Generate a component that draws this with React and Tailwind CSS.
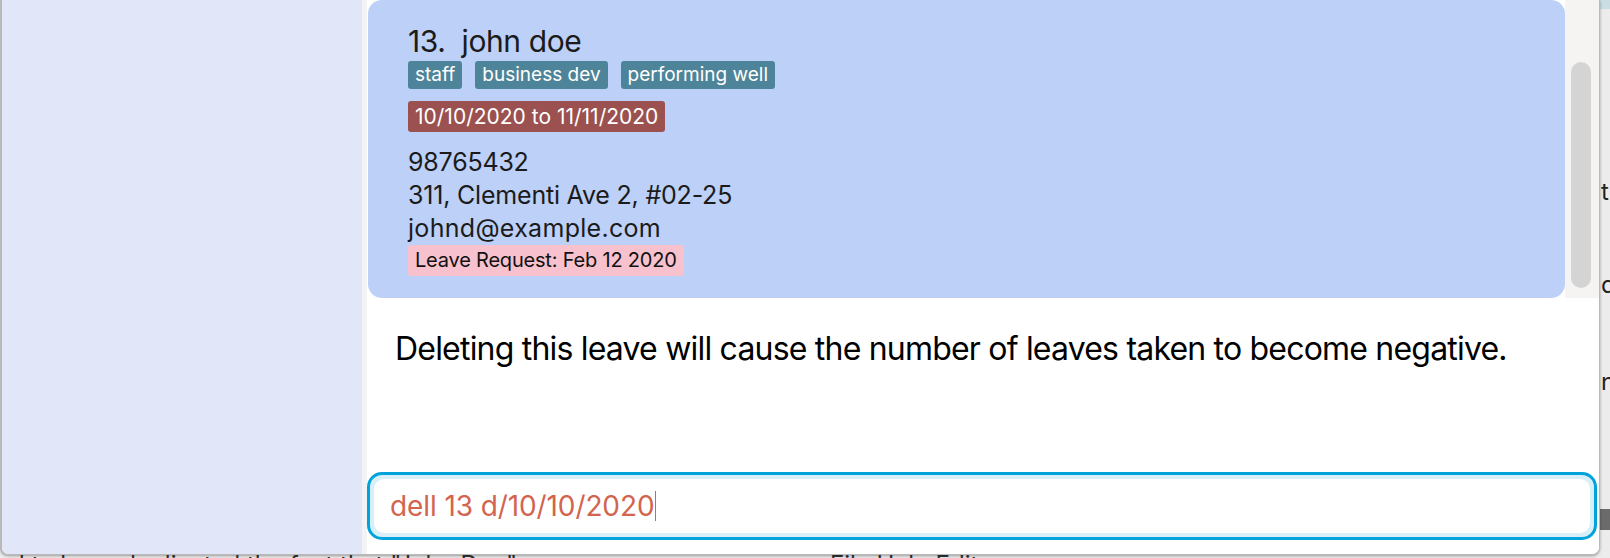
import React from "react";

const tags = ["staff", "business dev", "performing well"];

function PersonCard() {
  return (
    <div className="w-[1197px] h-[298px] ml-px bg-[#bdd0f7] rounded-[14px] pl-10 pt-6 text-[#1b1b1b]">
      <div className="text-[30px] leading-[34px] tracking-[-0.4px]">13.&nbsp; john doe</div>
      <div className="flex gap-[13px] mt-[3px]">
        {tags.map((t) => (
          <span
            key={t}
            className="h-[28px] px-[7px] rounded-[3px] bg-[#4e8499] text-white text-[19px] leading-[28px]"
          >
            {t}
          </span>
        ))}
      </div>
      <div className="flex mt-[12px]">
        <span className="h-[31px] px-[7px] rounded-[3px] bg-[#9a5150] text-white text-[21px] leading-[31px]">
          10/10/2020 to 11/11/2020
        </span>
      </div>
      <div className="mt-[14px] text-[25px] leading-[33px] tracking-[-0.2px]">
        <div>98765432</div>
        <div>311, Clementi Ave 2, #02-25</div>
        <div className="tracking-[0.3px]">johnd@example.com</div>
      </div>
      <div className="flex">
        <span className="h-[31px] px-[7px] rounded-[3px] bg-[#f7c1cd] text-[#111] text-[20px] leading-[31px] tracking-[-0.2px]">
          Leave Request: Feb 12 2020
        </span>
      </div>
    </div>
  );
}

export default function App() {
  return (
    <div className="relative w-[1610px] h-[558px] overflow-hidden bg-[#ececec] font-['Inter',sans-serif]">
      {/* window behind */}
      <div className="absolute right-0 top-0 w-[10px] h-[9px] bg-[#c9dde3]" />
      <div className="absolute left-[1601px] top-[180px] text-[24px] leading-none text-[#222]">th</div>
      <div className="absolute left-[1601px] top-[273px] text-[24px] leading-none text-[#222]">d</div>
      <div className="absolute left-[1601px] top-[370px] text-[24px] leading-none text-[#222]">n</div>
      <div className="absolute right-0 top-[509px] w-[10px] h-[21px] bg-[#6b6b6b]" />
      <div className="absolute left-[10px] top-[553px] text-[24px] leading-none text-[#333] whitespace-nowrap">
        d to have duplicated the fact that "John Doe"
      </div>
      <div className="absolute left-[830px] top-[553px] text-[24px] leading-none text-[#333] whitespace-nowrap">
        File  Help      Edit
      </div>

      {/* app window */}
      <div className="absolute left-0 top-0 w-[1600px] h-[555px] flex bg-white border-l-2 border-b border-r border-[#b9b9b9] rounded-b-[8px] overflow-hidden shadow-[0_1px_3px_rgba(0,0,0,0.35)]">
        <div className="w-[360px] h-full bg-[#e1e7f9]" />
        <div className="w-[5px] h-full bg-[#f3f3f3]" />
        <div className="flex-1 flex flex-col bg-white">
          <div className="h-[298px] flex bg-[#f5f4f2]">
            <div className="bg-white">
              <PersonCard />
            </div>
            <div className="flex-1 flex justify-center pt-[62px] pb-[10px]">
              <div className="w-[20px] h-full rounded-full bg-[#d4d4d4]" />
            </div>
            <div className="w-[2px]" />
          </div>
          <div className="h-[174px] pl-7 pt-[31px] text-[32px] leading-[40px] text-black tracking-[-0.8px]">
            Deleting this leave will cause the number of leaves taken to become negative.
          </div>
          <div className="pr-[2px]">
            <div className="h-[68px] rounded-[15px] border-[3px] border-[#00a3da] bg-[#d8eff9] p-[4px]">
              <div className="h-full rounded-[10px] bg-white flex items-center pl-4 text-[28px] tracking-[-0.1px] text-[#d2654f]">
                dell 13 d/10/10/2020
                <span className="ml-px w-px h-[30px] bg-[#d2654f]" />
              </div>
            </div>
          </div>
        </div>
      </div>
    </div>
  );
}
